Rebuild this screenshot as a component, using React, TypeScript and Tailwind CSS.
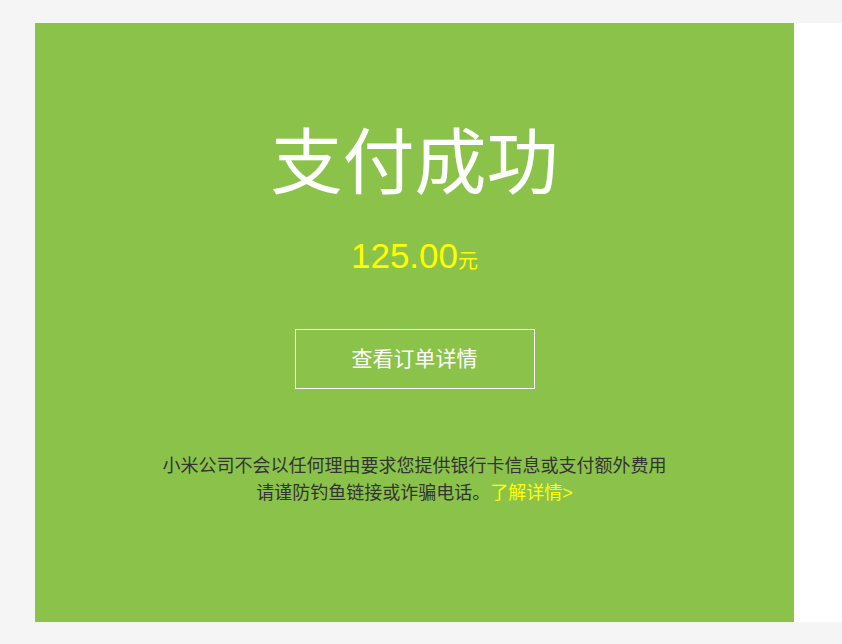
import React from "react";

export default function App() {
  const cjk = { fontFamily: '"Liberation Sans", "Noto Sans CJK SC", sans-serif' };
  return (
    <div className="min-h-screen overflow-hidden bg-[#f5f5f5] pt-[23px] pb-[22px] pl-[35px]" style={cjk}>
      <div className="flex h-[599px] bg-white">
        <div className="flex w-[759px] shrink-0 flex-col items-center bg-[#8bc34a] pt-[104px]">
          <h1 className="text-[72px] leading-[72px] text-white">支付成功</h1>
          <div className="mt-[39px] flex items-baseline text-[#ffff00] leading-[36px]">
            <span className="text-[35px]">125.00</span>
            <span className="text-[20px]">元</span>
          </div>
          <button className="mt-[50px] flex h-[60px] w-[240px] items-center justify-center border border-white text-[21px] text-white">
            查看订单详情
          </button>
          <div className="mt-[64px] text-center text-[18px] leading-[27px] text-[#333]">
            <p>小米公司不会以任何理由要求您提供银行卡信息或支付额外费用</p>
            <p>
              请谨防钓鱼链接或诈骗电话。<a className="text-[#ffff00]">了解详情&gt;</a>
            </p>
          </div>
        </div>
        <div className="flex-1 bg-white" />
      </div>
    </div>
  );
}
